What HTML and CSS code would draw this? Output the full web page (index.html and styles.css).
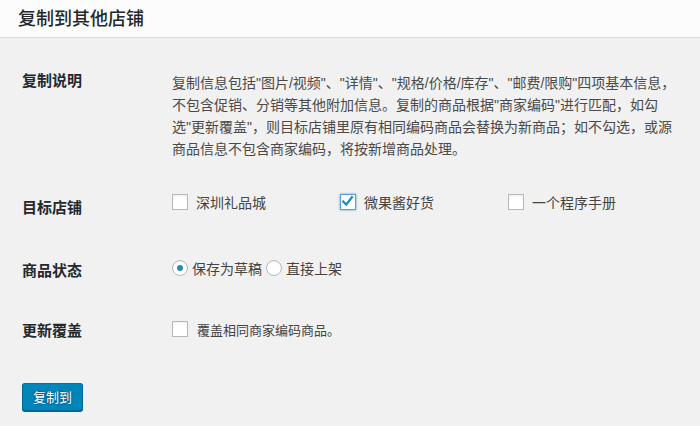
FILE: index.html
```html
<!DOCTYPE html>
<html lang="zh-CN">
<head>
<meta charset="utf-8">
<title>复制到其他店铺</title>
<link rel="stylesheet" href="styles.css">
</head>
<body>
<header class="header"><h1 class="title">复制到其他店铺</h1></header>
<main class="main">
  <div class="row row-desc">
    <div class="label">复制说明</div>
    <p class="desc">复制信息包括"图片/视频"、"详情"、"规格/价格/库存"、"邮费/限购"四项基本信息，不包含促销、分销等其他附加信息。复制的商品根据"商家编码"进行匹配，如勾选"更新覆盖"，则目标店铺里原有相同编码商品会替换为新商品；如不勾选，或源商品信息不包含商家编码，将按新增商品处理。</p>
  </div>
  <div class="row row-shops">
    <div class="label">目标店铺</div>
    <div class="options">
      <label class="opt"><span class="cb"></span><span class="opt-text">深圳礼品城</span></label>
      <label class="opt"><span class="cb cb-checked"><svg viewBox="0 0 16 16" width="14" height="14"><path d="M2.5 7.5 L6 11 L12.5 2.5" fill="none" stroke="#1e8cbe" stroke-width="2.6" stroke-linecap="square"/></svg></span><span class="opt-text">微果酱好货</span></label>
      <label class="opt"><span class="cb"></span><span class="opt-text">一个程序手册</span></label>
    </div>
  </div>
  <div class="row row-status">
    <div class="label">商品状态</div>
    <div class="radios">
      <label class="radio-opt"><span class="radio radio-checked"></span><span class="radio-text">保存为草稿</span></label>
      <label class="radio-opt"><span class="radio"></span><span class="radio-text">直接上架</span></label>
    </div>
  </div>
  <div class="row row-update">
    <div class="label">更新覆盖</div>
    <label class="opt-small"><span class="cb"></span><span class="small-text">覆盖相同商家编码商品。</span></label>
  </div>
  <button class="btn" type="button">复制到</button>
</main>
</body>
</html>
```
FILE: styles.css
```css
* { box-sizing: border-box; }
html, body { margin: 0; padding: 0; }
body {
  background: #f1f1f1;
  font-family: "Noto Sans CJK SC", "Liberation Sans", sans-serif;
  color: #444;
  width: 700px;
  height: 426px;
  overflow: hidden;
}
.header {
  background: #fcfcfc;
  height: 38px;
  border-bottom: 1px solid #dcdcdc;
  padding-left: 18px;
}
.title {
  margin: 0;
  font-size: 18px;
  line-height: 35px;
  font-weight: 500;
  color: #23282d;
}
.main { padding: 0 22px; }
.row {
  display: grid;
  grid-template-columns: 150px 1fr;
  align-items: start;
}
.label {
  font-size: 15px;
  line-height: 19px;
  font-weight: 700;
  color: #23282d;
}
.row-desc .label { padding-top: 32px; }
.desc {
  margin: 0;
  padding-top: 34px;
  width: 505px;
  font-family: "Liberation Sans", "Noto Sans CJK SC", sans-serif;
  font-size: 14px;
  line-height: 22px;
  color: #4a4a4a;
}
.row-shops .label { padding-top: 37px; }
.options {
  display: flex;
  padding-top: 34px;
}
.opt {
  width: 168px;
  display: flex;
  align-items: center;
  height: 16px;
  font-size: 14px;
  color: #444;
}
.cb {
  flex: none;
  width: 16px;
  height: 16px;
  background: #fff;
  border: 1px solid #b4b9be;
  box-shadow: inset 0 1px 2px rgba(0,0,0,.07);
  display: flex;
  align-items: center;
  justify-content: center;
}
.cb-checked {
  border-color: #5b9dd9;
  box-shadow: 0 0 2px rgba(30,140,190,.8);
}
.opt-text { margin-left: 8px; line-height: 16px; }
.row-status .label { padding-top: 44px; }
.radios {
  display: flex;
  padding-top: 44px;
}
.radio-opt {
  display: flex;
  align-items: center;
  height: 16px;
  margin-right: 4px;
  font-size: 14px;
  color: #444;
}
.radio {
  flex: none;
  width: 16px;
  height: 16px;
  border-radius: 50%;
  background: #fff;
  border: 1px solid #b4b9be;
  box-shadow: inset 0 1px 2px rgba(0,0,0,.07);
  display: flex;
  align-items: center;
  justify-content: center;
}
.radio-checked::before {
  content: "";
  width: 6px;
  height: 6px;
  border-radius: 50%;
  background: #1e8cbe;
}
.radio-text { margin-left: 4px; line-height: 16px; }
.row-update .label { padding-top: 41px; }
.opt-small {
  display: flex;
  align-items: center;
  height: 16px;
  margin-top: 42px;
  font-size: 13px;
  color: #444;
}
.small-text { margin-left: 9px; }
.btn {
  display: block;
  margin-top: 44px;
  height: 28px;
  padding: 0 10px 1px;
  font-family: "Noto Sans CJK SC", sans-serif;
  font-size: 13px;
  line-height: 26px;
  color: #fff;
  background: #0085ba;
  border: 1px solid;
  border-color: #0073aa #006799 #006799;
  border-radius: 3px;
  box-shadow: 0 1px 0 #006799;
  text-shadow: 0 -1px 1px #006799, 1px 0 1px #006799, 0 1px 1px #006799, -1px 0 1px #006799;
}
```
